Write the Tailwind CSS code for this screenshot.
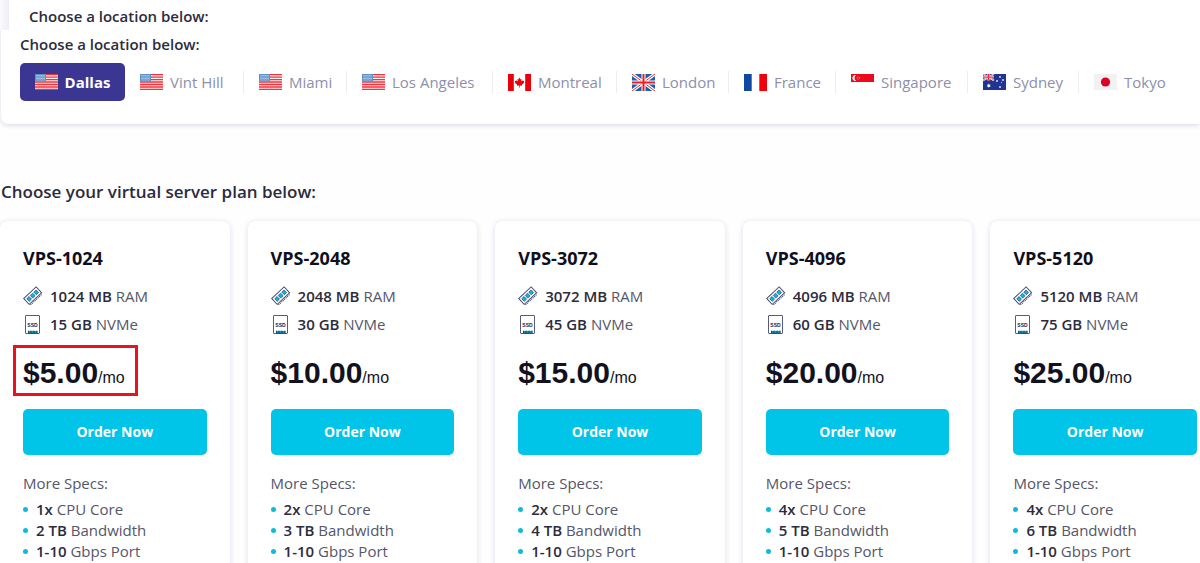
<!DOCTYPE html>
<html lang="en">
<head>
    <meta charset="UTF-8">
    <meta name="viewport" content="width=device-width, initial-scale=1.0">
    <title>VPS Plans</title>
    <script src="https://cdn.jsdelivr.net/npm/@tailwindcss/browser@4"></script>
</head>
<body class="bg-[#fefeff] font-['Open_Sans',sans-serif] text-[#2b2b3d] overflow-x-hidden">

    <!-- Flag and spec icons -->
    <svg class="hidden" aria-hidden="true">
        <symbol id="flag-us" viewBox="0 0 23 16" preserveAspectRatio="none">
            <rect width="23" height="16" fill="#fdeeee"/>
            <path d="M0 .6h23M0 3.1h23M0 5.6h23M0 8h23M0 10.5h23M0 13h23M0 15.4h23" stroke="#f5333f" stroke-width="1.3"/>
            <rect width="11" height="7.5" fill="#5b8fc7"/>
            <path d="M1 1.5h9M1 3h9M1 4.5h9M1 6h9" stroke="#a9c6e4" stroke-width=".8"/>
        </symbol>
        <symbol id="flag-ca" viewBox="0 0 23 17" preserveAspectRatio="none">
            <rect width="23" height="17" fill="#fff"/>
            <path d="M0 0h5.8v17H0zM17.2 0H23v17h-5.8z" fill="#e8000b"/>
            <path d="M11.5 3.5l1.1 2 1-.5-.4 2.6 1.4-1.4.3.8 1.4-.2-.6 1.5.6.5-2.5 2 .2 1-2.2-.3v2.2h-.6v-2.2l-2.2.3.2-1-2.5-2 .6-.5-.6-1.5 1.4.2.3-.8 1.4 1.4-.4-2.6 1 .5z" fill="#e8000b"/>
        </symbol>
        <symbol id="flag-gb" viewBox="0 0 23 17" preserveAspectRatio="none">
            <rect width="23" height="17" fill="#1d5fae"/>
            <path d="M0 0l23 17M23 0L0 17" stroke="#fff" stroke-width="3.2"/>
            <path d="M0 0l23 17M23 0L0 17" stroke="#ee2a35" stroke-width="1"/>
            <path d="M11.5 0v17M0 8.5h23" stroke="#fff" stroke-width="4"/>
            <path d="M11.5 0v17M0 8.5h23" stroke="#ee1c25" stroke-width="2"/>
        </symbol>
        <symbol id="flag-fr" viewBox="0 0 23 17" preserveAspectRatio="none">
            <rect width="23" height="17" fill="#fff"/>
            <rect width="7.7" height="17" fill="#0f47a1"/>
            <rect x="15.3" width="7.7" height="17" fill="#f0000c"/>
        </symbol>
        <symbol id="flag-sg" viewBox="0 0 23 16" preserveAspectRatio="none">
            <rect width="23" height="16" fill="#fff"/>
            <rect width="23" height="8" fill="#ea0a1c"/>
            <path d="M5 1.2a2.9 2.9 0 1 0 0 5.6a3.3 3.3 0 0 1 0-5.6z" fill="#fff"/>
            <circle cx="7.3" cy="4" r="1.3" fill="none" stroke="#ffb0b6" stroke-width=".8" stroke-dasharray=".9 .7"/>
        </symbol>
        <symbol id="flag-au" viewBox="0 0 23 16" preserveAspectRatio="none">
            <rect width="23" height="16" fill="#20338e"/>
            <path d="M0 0l11 6.5M11 0L0 6.5" stroke="#fff" stroke-width="1.6"/>
            <path d="M0 0l11 6.5M11 0L0 6.5" stroke="#ee3a45" stroke-width=".6"/>
            <path d="M5.5 0v6.5M0 3.2h11" stroke="#fff" stroke-width="2.2"/>
            <path d="M5.5 0v6.5M0 3.2h11" stroke="#ee2a35" stroke-width="1.3"/>
            <path d="M5.8 9.6l.6 1.1 1.2-.1-.6 1.1.6 1.1-1.2-.1-.6 1.1-.6-1.1-1.2.1.6-1.1-.6-1.1 1.2.1z" fill="#fff"/>
            <g fill="#e8ecff"><circle cx="17" cy="2.9" r=".9"/><circle cx="14" cy="7" r=".9"/><circle cx="20" cy="6" r=".9"/><circle cx="17" cy="13" r=".9"/><circle cx="18.4" cy="8.6" r=".5"/></g>
        </symbol>
        <symbol id="flag-jp" viewBox="0 0 23 16" preserveAspectRatio="none">
            <rect width="23" height="16" fill="#f2f2f3"/>
            <circle cx="11.5" cy="8" r="4.6" fill="#dc0024"/>
        </symbol>
        <symbol id="icon-ram" viewBox="0 0 20 20">
            <g transform="rotate(-43 10 10)" stroke="#45456b" fill="#fff">
                <rect x="1.5" y="5.5" width="17" height="8" stroke-width="1"/>
                <path d="M2 14.8h16" stroke-width="1" stroke-dasharray="1.2 .8"/>
                <g fill="#12b5dc" stroke="#23547c" stroke-width=".7"><rect x="3.6" y="7.7" width="3.2" height="3.6"/><rect x="8.4" y="7.7" width="3.2" height="3.6"/><rect x="13.2" y="7.7" width="3.2" height="3.6"/></g>
            </g>
        </symbol>
        <symbol id="icon-ssd" viewBox="0 0 20 20">
            <rect x="2.5" y="1.5" width="14" height="18" rx=".5" fill="#fff" stroke="#5a5a7d"/>
            <path d="M5 16.8h9.5v2.7H5z" fill="#0a9cc4"/>
            <path d="M5 19.2h9.5M5.5 16.8v2M8 16.8v2M11 16.8v2M14 16.8v2" stroke="#23345c" stroke-width=".8"/>
            <text x="9.5" y="12.6" text-anchor="middle" font-family="Liberation Sans" font-weight="700" font-size="5" fill="#23234a">SSD</text>
        </symbol>
    </svg>

    <!-- Location picker -->
    <header>
        <div class="h-[30px] pl-[9px] bg-linear-to-r from-[#fafafd] to-[#ededf5] to-[9px]">
            <p class="h-full bg-white pl-5 pt-[5px] text-[15px] leading-[22px] font-semibold">Choose a location below:</p>
        </div>
        <section class="pl-[19px] pt-[3px] pb-[23px] rounded-bl-lg border-l border-[#efeff5] bg-white shadow-[0_3px_4px_-1px_#dfdfeb]">
            <h2 class="text-[15px] leading-[22px] font-semibold">Choose a location below:</h2>
            <nav id="locations" class="mt-2 grid grid-cols-[105fr_118fr_103fr_146fr_124fr_112fr_107fr_132fr_111fr_122fr]"></nav>
        </section>
    </header>

    <!-- Plans -->
    <main class="pt-[55px]">
        <h2 class="pl-px text-[17px] leading-[26px] font-semibold">Choose your virtual server plan below:</h2>
        <div id="plans" class="mt-4 -mr-5 grid grid-cols-5 gap-[18px]"></div>
    </main>

    <script>
        const locations = [
            ['us', 'Dallas'], ['us', 'Vint Hill'], ['us', 'Miami'], ['us', 'Los Angeles'], ['ca', 'Montreal'],
            ['gb', 'London'], ['fr', 'France'], ['sg', 'Singapore'], ['au', 'Sydney'], ['jp', 'Tokyo']
        ];

        const plans = [
            { ram: 1024, disk: 15, price: '5.00', cpu: 1, bandwidth: 2, highlight: true },
            { ram: 2048, disk: 30, price: '10.00', cpu: 2, bandwidth: 3 },
            { ram: 3072, disk: 45, price: '15.00', cpu: 2, bandwidth: 4 },
            { ram: 4096, disk: 60, price: '20.00', cpu: 4, bandwidth: 5 },
            { ram: 5120, disk: 75, price: '25.00', cpu: 4, bandwidth: 6 }
        ];

        document.getElementById('locations').innerHTML = locations.map(([flag, name], i) => `
            <button class="flex items-center h-[38px] whitespace-nowrap text-[15px] ${i === 0 ? 'justify-center rounded-[5px] bg-[#3a3691] text-white font-bold' : 'text-[#8d8fab] font-medium'}">
                <span class="flex items-center gap-[7px] h-[22px] ${i === 0 ? '' : 'pl-[15px]'} ${i > 1 ? 'border-l border-[#ececf1]' : ''}">
                    <svg class="w-[23px] ${['ca', 'gb', 'fr'].includes(flag) ? 'h-[17px]' : 'h-4'}"><use href="#flag-${flag}"/></svg>
                    ${name}
                </span>
            </button>
        `).join('');

        document.getElementById('plans').innerHTML = plans.map(plan => `
            <article class="px-[23px] pt-[23px] pb-8 rounded-lg bg-white shadow-[0_1px_5px_1px_#e6e6ef] text-[15px] text-[#55566a]">
                <h3 class="text-lg leading-7 font-bold text-[#0f0f1e]">VPS-${plan.ram}</h3>
                <p class="mt-[10px] flex items-center gap-[7px] h-7"><svg class="size-5"><use href="#icon-ram"/></svg><span><b class="font-semibold text-[#2b2b3d]">${plan.ram} MB</b> RAM</span></p>
                <p class="flex items-center gap-[7px] h-7"><svg class="size-5"><use href="#icon-ssd"/></svg><span><b class="font-semibold text-[#2b2b3d]">${plan.disk} GB</b> NVMe</span></p>
                <p class="relative mt-[15px] flex items-baseline h-10 font-['Liberation_Sans',sans-serif] text-[#12121f]">
                    <span class="text-3xl leading-10 font-bold">$${plan.price}</span><span class="text-base">/mo</span>
                    ${plan.highlight ? '<span class="absolute -left-[10px] -top-2 w-[125px] h-[51px] border-3 border-[#e8131c]"></span>' : ''}
                </p>
                <button class="mt-4 w-full h-[46px] rounded-[5px] bg-[#00c4e8] text-white text-sm font-bold">Order Now</button>
                <p class="mt-[18px] leading-[21px]">More Specs:</p>
                <ul class="mt-[5px] leading-[21px]">
                    <li class="flex items-center gap-2"><i class="size-[5px] rounded-full bg-[#0dbbdc]"></i><span><b class="font-semibold text-[#2b2b3d]">${plan.cpu}x</b> CPU Core</span></li>
                    <li class="flex items-center gap-2"><i class="size-[5px] rounded-full bg-[#0dbbdc]"></i><span><b class="font-semibold text-[#2b2b3d]">${plan.bandwidth} TB</b> Bandwidth</span></li>
                    <li class="flex items-center gap-2"><i class="size-[5px] rounded-full bg-[#0dbbdc]"></i><span><b class="font-semibold text-[#2b2b3d]">1-10</b> Gbps Port</span></li>
                </ul>
            </article>
        `).join('');
    </script>
</body>
</html>
